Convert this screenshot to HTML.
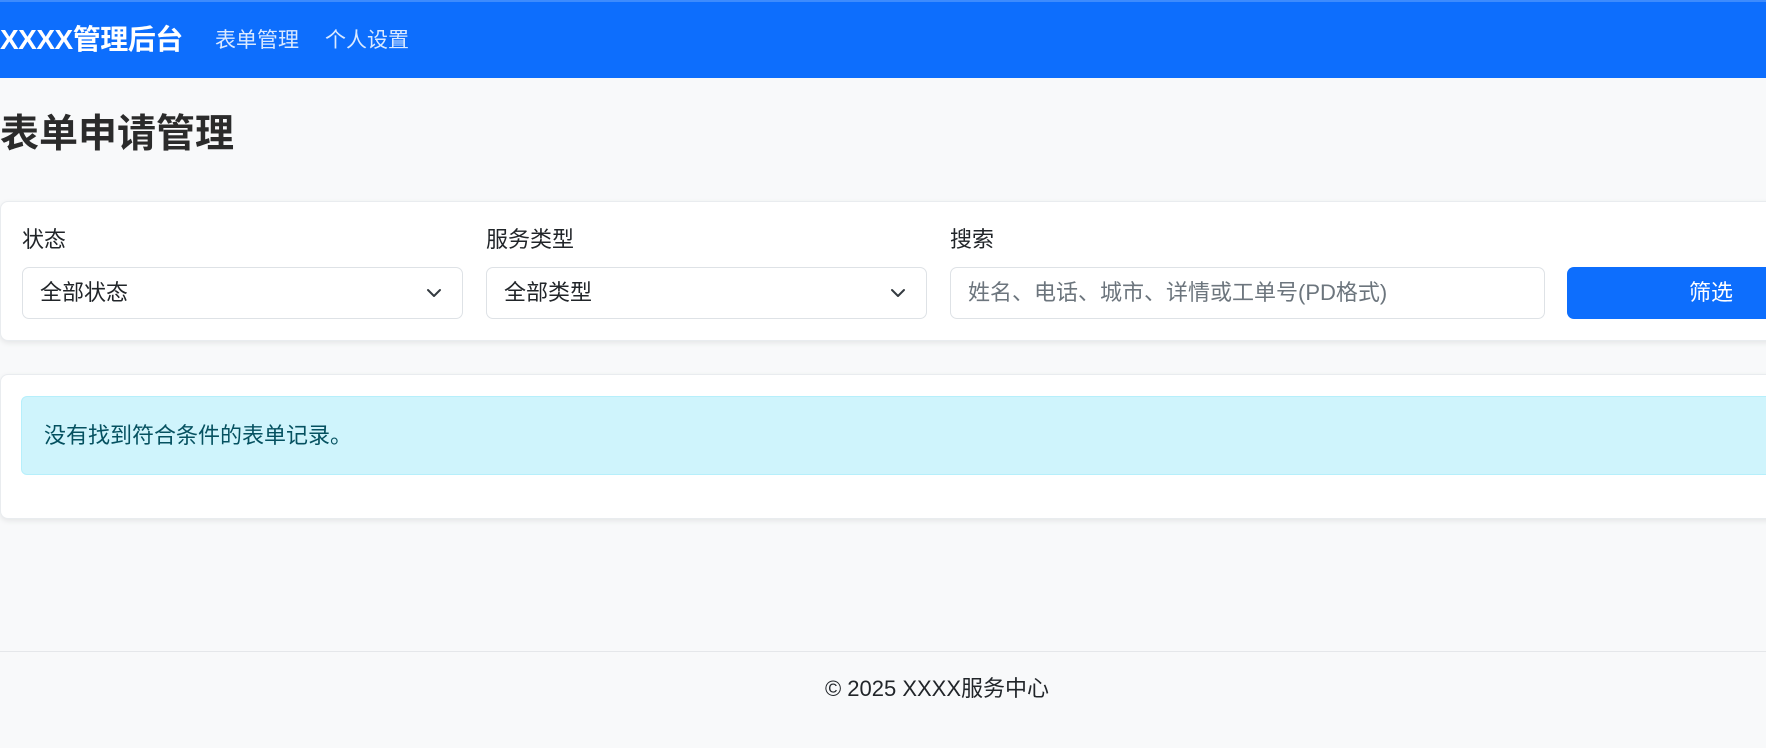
<!DOCTYPE html>
<html><head><meta charset="utf-8"><style>
*{box-sizing:border-box;margin:0;padding:0}
body{width:1766px;height:748px;overflow:hidden;background:#f8f9fa;font-family:"Liberation Sans","Noto Sans CJK SC",sans-serif;color:#212529;position:relative}
.nav{position:absolute;left:0;top:0;width:1766px;height:78px;background:#0d6efd;border-top:2px solid #3d8bfd}
.brand{position:absolute;left:0;top:20px;font-size:28px;font-weight:bold;color:#fff;line-height:36px;letter-spacing:-0.5px}
.link{position:absolute;top:24px;font-size:21px;color:rgba(255,255,255,.85);line-height:30px}
h1{position:absolute;left:0;top:110px;font-size:39px;font-weight:bold;line-height:50px;color:#2b2b2b}
.card{position:absolute;left:0;width:1790px;background:#fff;border:1px solid #e9ecef;border-radius:8px;box-shadow:0 2px 6px rgba(0,0,0,.08)}
.lbl{position:absolute;top:225px;font-size:22px;line-height:30px}
.sel{position:absolute;top:267px;height:52px;background:#fff;border:1px solid #dee2e6;border-radius:7px;font-size:22px;line-height:50px;padding-left:17px}
.sel svg{position:absolute;right:20px;top:19px}
.ph{color:#6c757d}
.btn{position:absolute;left:1567px;top:267px;width:240px;height:52px;background:#0d6efd;border-radius:7px;color:#fff;font-size:22px;line-height:52px;padding-left:122px}
.alert{position:absolute;left:21px;top:396px;width:1800px;height:79px;background:#cff4fc;border:1px solid #b6effb;border-radius:6px;color:#055160;font-size:22px;line-height:77px;padding-left:22px}
.foot{position:absolute;left:0;top:651px;width:1766px;border-top:1px solid #e5e7ea}
.ft{position:absolute;left:737px;width:400px;text-align:center;top:674px;font-size:22px;line-height:30px;color:#212529}
</style></head><body>
<div class="nav">
<div class="brand">XXXX管理后台</div>
<div class="link" style="left:215px">表单管理</div>
<div class="link" style="left:325px">个人设置</div>
</div>
<h1>表单申请管理</h1>
<div class="card" style="top:201px;height:140px"></div>
<div class="lbl" style="left:22px">状态</div>
<div class="lbl" style="left:486px">服务类型</div>
<div class="lbl" style="left:950px">搜索</div>
<div class="sel" style="left:22px;width:441px">全部状态<svg width="16" height="12" viewBox="0 0 16 12"><path d="M2 3l6 6 6-6" fill="none" stroke="#343a40" stroke-width="2" stroke-linecap="round" stroke-linejoin="round"/></svg></div>
<div class="sel" style="left:486px;width:441px">全部类型<svg width="16" height="12" viewBox="0 0 16 12"><path d="M2 3l6 6 6-6" fill="none" stroke="#343a40" stroke-width="2" stroke-linecap="round" stroke-linejoin="round"/></svg></div>
<div class="sel ph" style="left:950px;width:595px">姓名、电话、城市、详情或工单号(PD格式)</div>
<div class="btn">筛选</div>
<div class="card" style="top:374px;height:145px"></div>
<div class="alert">没有找到符合条件的表单记录。</div>
<div class="foot"></div>
<div class="ft">© 2025 XXXX服务中心</div>
</body></html>
